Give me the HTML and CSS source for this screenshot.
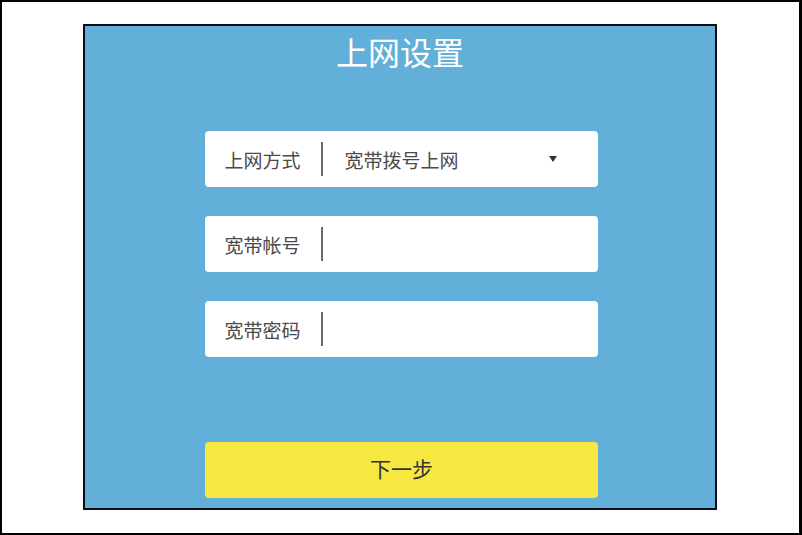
FILE: index.html
```html
<!DOCTYPE html>
<html lang="zh-CN">

<head>
    <meta charset="UTF-8">
    <meta name="viewport" content="width=device-width, initial-scale=1.0">
    <title>上网设置</title>
    <link rel="stylesheet" href="styles.css">
</head>

<body>

    <div class="frame">
        <div class="panel">
            <h1 class="title">上网设置</h1>

            <div class="form">
                <div class="row">
                    <span class="label">上网方式</span>
                    <span class="sep"></span>
                    <span class="value">宽带拨号上网</span>
                    <span class="arrow"></span>
                </div>

                <div class="row">
                    <span class="label">宽带帐号</span>
                    <span class="sep"></span>
                    <span class="value"></span>
                </div>

                <div class="row">
                    <span class="label">宽带密码</span>
                    <span class="sep"></span>
                    <span class="value"></span>
                </div>
            </div>

            <div class="btn">下一步</div>
        </div>
    </div>

</body>

</html>
```

FILE: styles.css
```css
* {
    margin: 0px;
    padding: 0px;
    box-sizing: border-box;
}

body {
    width: 802px;
    height: 535px;
    background-color: #fff;
    font-family: "Noto Sans CJK SC", "Noto Sans", sans-serif;
    overflow: hidden;
}

.frame {
    width: 802px;
    height: 535px;
    border: 2px solid #000;
    border-right-width: 3px;
    padding: 22px 0 0 81px;
}

.panel {
    width: 634px;
    height: 486px;
    border: 2px solid #0b0d18;
    background-color: #62afd9;
}

.panel .title {
    margin-top: 5px;
    height: 40px;
    line-height: 40px;
    font-size: 32px;
    font-weight: 400;
    color: #fff;
    text-align: center;
}

.form {
    margin-top: 60px;
    padding-left: 2px;
    display: flex;
    flex-direction: column;
    align-items: center;
    gap: 29px;
}

.row {
    width: 393px;
    height: 56px;
    background-color: #fff;
    border-radius: 4px;
    display: flex;
    align-items: center;
    padding: 0 41px 0 20px;

    color: #4a4a4a;
    font-size: 19px;
}

.row .label {
    width: 76px;
    white-space: nowrap;
}

/* 竖线分隔 */
.row .sep {
    width: 2px;
    height: 34px;
    margin: 0 22px 0 20px;
    background-color: #6a6a6a;
}

.row .value {
    flex: 1;
    white-space: nowrap;
}

.row .arrow {
    width: 0;
    height: 0;
    border-left: 4px solid transparent;
    border-right: 4px solid transparent;
    border-top: 6px solid #333;
}

.btn {
    width: 393px;
    height: 56px;
    margin: 85px 0 0 120px;
    border-radius: 4px;
    background-color: #f6e840;

    color: #333;
    font-size: 21px;
    line-height: 52px;
    text-align: center;
}
```
